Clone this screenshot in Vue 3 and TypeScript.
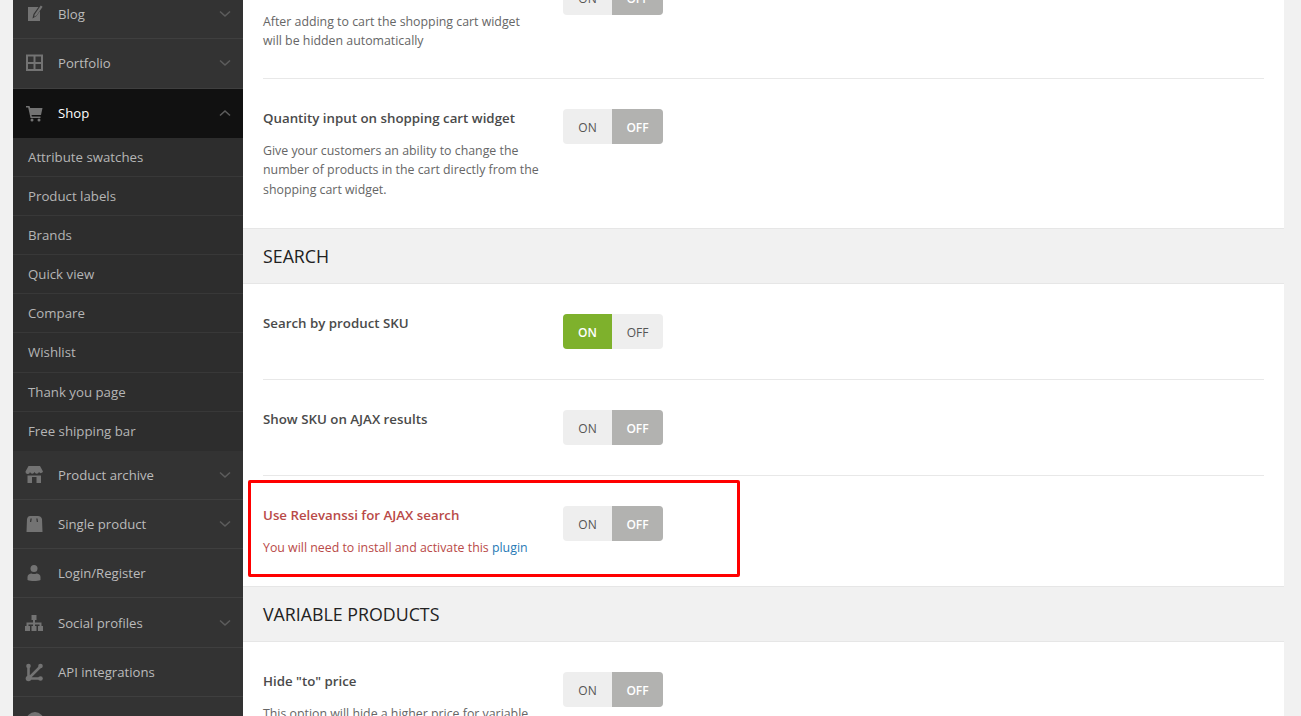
<template>
  <div class="page">
    <aside class="sidebar">
      <template v-for="item in menu" :key="item.icon">
        <div class="menu-item" :class="{ active: item.active }">
          <svg class="menu-icon" viewBox="0 0 20 20" v-html="icons[item.icon]"></svg>
          <span class="menu-label">{{ item.label }}</span>
          <svg v-if="item.chevron" class="chevron" viewBox="0 0 12 8">
            <path :d="item.active ? 'M1 6.5 6 2l5 4.5' : 'M1 1.5 6 6l5-4.5'" />
          </svg>
        </div>
        <div v-if="item.active" class="submenu">
          <div v-for="sub in shopItems" :key="sub" class="sub-item">{{ sub }}</div>
        </div>
      </template>
    </aside>

    <main class="content">
      <div class="row first-row">
        <div class="row-text">
          <p class="desc">After adding to cart the shopping cart widget will be hidden automatically</p>
        </div>
        <div class="switch"><span class="opt">ON</span><span class="opt off-sel">OFF</span></div>
      </div>
      <div class="row quantity-row">
        <div class="row-text">
          <h4>Quantity input on shopping cart widget</h4>
          <p class="desc">Give your customers an ability to change the number of products in the cart directly from the shopping cart widget.</p>
        </div>
        <div class="switch"><span class="opt">ON</span><span class="opt off-sel">OFF</span></div>
      </div>

      <h2 class="section-title">SEARCH</h2>
      <div class="row plain-row">
        <div class="row-text"><h4>Search by product SKU</h4></div>
        <div class="switch"><span class="opt on-sel">ON</span><span class="opt">OFF</span></div>
      </div>
      <div class="row plain-row">
        <div class="row-text"><h4>Show SKU on AJAX results</h4></div>
        <div class="switch"><span class="opt">ON</span><span class="opt off-sel">OFF</span></div>
      </div>
      <div class="row warn-row">
        <div class="row-text">
          <h4>Use Relevanssi for AJAX search</h4>
          <p class="desc">You will need to install and activate this <a>plugin</a></p>
        </div>
        <div class="switch"><span class="opt">ON</span><span class="opt off-sel">OFF</span></div>
        <div class="highlight"></div>
      </div>

      <h2 class="section-title">VARIABLE PRODUCTS</h2>
      <div class="row no-line">
        <div class="row-text">
          <h4>Hide "to" price</h4>
          <p class="desc">This option will hide a higher price for variable products</p>
        </div>
        <div class="switch"><span class="opt">ON</span><span class="opt off-sel">OFF</span></div>
      </div>
    </main>
  </div>
</template>

<script setup lang="ts">
type MenuItem = { label: string; icon: string; chevron?: boolean; active?: boolean }

const icons: Record<string, string> = {
  blog: '<path d="M3 3h10.500L8.500 10l-1 4.500 4-2.500 3.500-5v10H3z"/><path d="M9.800 10.200 15.800 1.500l1.800 1.300-6 8.600-2.500 1.300z"/>',
  grid: '<path fill-rule="evenodd" d="M1 1.500h17v16.500H1zM3 3.500v5.500h5.500V3.500zM10.500 3.500v5.500H16V3.500zM3 11v5h5.500v-5zM10.500 11v5H16v-5z"/>',
  cart: '<path d="M1 3h3.500l.7 2H17.500l-1.500 7H6.500l.4 1.500H15.500V15H5.500L3.200 4.500H1z"/><circle cx="7" cy="17" r="1.500"/><circle cx="14" cy="17" r="1.500"/>',
  store: '<path d="M3.500 1h11.500l3 5.500a2.200 2.200 0 0 1-4 .6 2.400 2.400 0 0 1-4.500 0 2.400 2.400 0 0 1-4.500 0 2.200 2.200 0 0 1-4.500-.6z"/><path fill-rule="evenodd" d="M2.500 10.500h13.500V18H2.500zM7 12v6h4.500v-6z"/>',
  bag: '<path fill-rule="evenodd" d="M5 2h8c2 0 3.500 1 4 3l.5 13H1.500L2 5c.5-2 1.500-3 3-3zM5.500 4.500 5 8h1.200L6.800 4.500zM11.300 4.500l.5 3.500H13l-.5-3.500z"/>',
  user: '<circle cx="9" cy="5.500" r="3.500"/><path d="M2.500 17v-3c0-2 2-3.500 4-3.500 1.500.8 3.500.8 5 0 2 0 4 1.500 4 3.500v3c-3 1.400-10 1.400-13 0z"/>',
  network: '<path d="M6.500 2h5v5H10v2.500h6.500V13H18v5h-5v-5h1.500v-1.500H10V13h1.500v5h-5v-5H8v-1.500H3.500V13H5v5H0v-5h1.500V9.500H8V7H6.500z"/>',
  api: '<path d="M3.500 4v12.500H15M3.500 16.500 15.500 4.500" fill="none" stroke="#737373" stroke-width="2.600"/><circle cx="3.500" cy="4" r="2.300"/><circle cx="15.500" cy="4" r="2.300"/><circle cx="15.500" cy="16.500" r="2.300"/><circle cx="3.500" cy="16.500" r="2.800"/>',
  globe: '<circle cx="10" cy="10" r="9"/>'
}

const menu: MenuItem[] = [
  { label: 'Blog', icon: 'blog', chevron: true },
  { label: 'Portfolio', icon: 'grid', chevron: true },
  { label: 'Shop', icon: 'cart', chevron: true, active: true },
  { label: 'Product archive', icon: 'store', chevron: true },
  { label: 'Single product', icon: 'bag', chevron: true },
  { label: 'Login/Register', icon: 'user' },
  { label: 'Social profiles', icon: 'network', chevron: true },
  { label: 'API integrations', icon: 'api' },
  { label: '', icon: 'globe' }
]

const shopItems = [
  'Attribute swatches',
  'Product labels',
  'Brands',
  'Quick view',
  'Compare',
  'Wishlist',
  'Thank you page',
  'Free shipping bar'
]
</script>

<style>
html,
body {
  margin: 0;
  height: 716px;
  overflow: hidden;
  background: #f1f1f1;
}
</style>

<style scoped>
.page {
  display: flex;
  height: 716px;
  overflow: hidden;
  padding: 0 17px 0 13px;
  font-family: "Open Sans", "Noto Sans", sans-serif;
  font-size: 13px;
  color: #555;
}

/* 侧栏 */
.sidebar {
  flex: 0 0 230px;
  background: #333;
  margin-top: -10px;
  height: 800px;
}

.menu-item {
  display: flex;
  align-items: center;
  height: 48.25px;
  padding: 0 12px;
  border-bottom: 1px solid #3f3f3f;
  color: #bbb;
  font-size: 13.15px;
}

.menu-item.active {
  background: #111;
  color: #fff;
  border-bottom-color: #111;
}

.menu-icon {
  width: 20px;
  height: 20px;
  fill: #737373;
  flex: none;
  margin-right: 13px;
}

.menu-label {
  flex: 1;
}

.chevron {
  width: 12px;
  height: 8px;
  fill: none;
  stroke: #5c5c5c;
  stroke-width: 1.6;
}

.submenu {
  background: #2d2d2d;
  padding-bottom: 0.8px;
}

.sub-item {
  height: 38.15px;
  line-height: 39px;
  padding-left: 15px;
  border-bottom: 1px solid #383838;
  color: #b5b5b5;
  font-size: 13.25px;
}

.sub-item:last-child {
  border-bottom: 0;
}

/* 内容 */
.content {
  flex: 1;
  min-width: 0;
  background: #fff;
}

.row {
  position: relative;
  display: flex;
  margin: 0 20px;
  padding: 30px 0;
  border-bottom: 1px solid #e8e8e8;
}

.first-row {
  margin-top: -50px;
  height: 68px;
}

.first-row .desc {
  padding-top: 18px;
}

.quantity-row {
  border-bottom: 0;
  height: 89px;
}

.plain-row {
  height: 35px;
}

.warn-row {
  border-bottom: 0;
  height: 50px;
}

.no-line {
  border-bottom: 0;
}

.row-text {
  flex: 0 0 277px;
  margin-right: 23px;
}

h4 {
  margin: 0;
  font-size: 13.3px;
  line-height: 18px;
  font-weight: 600;
  color: #4a4a4a;
}

.desc {
  margin: 13.5px 0 0;
  font-size: 12.35px;
  line-height: 19.5px;
  color: #666;
}

.warn-row h4,
.warn-row .desc {
  color: #b94a48;
}

.desc a {
  color: #2679b5;
}

.switch {
  display: flex;
  width: 100px;
  height: 35px;
  border-radius: 4px;
  overflow: hidden;
  font-size: 12px;
  line-height: 37px;
  text-align: center;
  background: #eee;
  color: #555;
}

.opt {
  flex: 0 0 49px;
}

.opt + .opt {
  flex: 0 0 51px;
}

.opt.off-sel {
  background: #b2b2b0;
  color: #fff;
  font-weight: 600;
}

.opt.on-sel {
  background: #7eb12c;
  color: #fff;
  font-weight: 600;
}

.section-title {
  margin: 0;
  height: 54px;
  padding-left: 20px;
  line-height: 54px;
  font-size: 17.8px;
  font-weight: 500;
  color: #222;
  background: #f1f1f1;
  border-top: 1px solid #e6e6e6;
  border-bottom: 1px solid #e6e6e6;
}

.highlight {
  position: absolute;
  left: -15px;
  top: 4px;
  width: 486px;
  height: 91px;
  border: 3px solid #f00;
  border-radius: 2px;
  pointer-events: none;
}
</style>
